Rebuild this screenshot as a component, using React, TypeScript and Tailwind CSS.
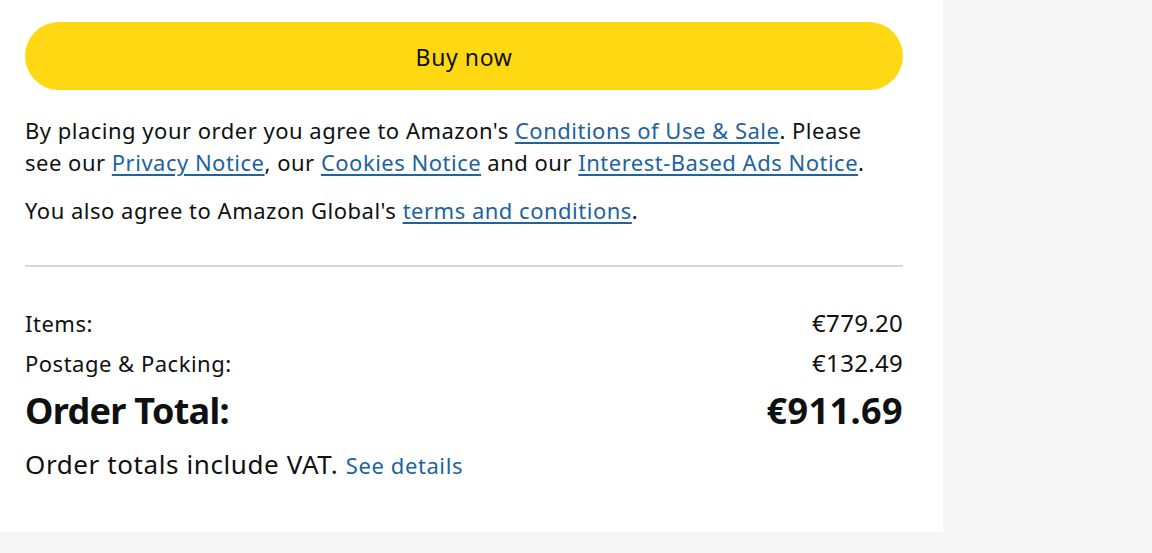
export default function App() {
  return (
    <div
      className="h-[553px] w-full overflow-hidden bg-[#f7f7f7] text-[#0f1111]"
      style={{ fontFamily: '"Noto Sans", "Open Sans", Arial, sans-serif' }}
    >
      <div className="h-[532px] w-[943px] bg-white pt-[22px] pr-[40px] pl-[25px]">
        <button
          type="button"
          className="flex h-[68px] w-full items-center justify-center rounded-full bg-[#ffd814] pt-[2px] text-[23px] tracking-[0.6px] text-[#0f1111]"
        >
          Buy now
        </button>

        <p className="mt-[24px] text-[22px] leading-[32px] tracking-[0.5px]">
          By placing your order you agree to Amazon's{" "}
          <Link>Conditions of Use &amp; Sale</Link>. Please see our{" "}
          <Link>Privacy Notice</Link>, our <Link>Cookies Notice</Link> and our{" "}
          <Link>Interest-Based Ads Notice</Link>.
        </p>
        <p className="mt-[16px] text-[22px] leading-[32px] tracking-[0.5px]">
          You also agree to Amazon Global's <Link>terms and conditions</Link>.
        </p>

        <div className="mt-[39px] h-[2px] w-full bg-[#d5d9d9]" />

        <div className="mt-[40px] flex flex-col gap-[8px]">
          <Row label="Items:" value="€779.20" />
          <Row label="Postage & Packing:" value="€132.49" />
        </div>
        <div className="mt-[10px] flex items-center justify-between text-[36px] leading-[44px] font-bold">
          <span className="tracking-[-0.7px]">Order Total:</span>
          <span className="tracking-[0.4px]">€911.69</span>
        </div>
        <div className="mt-[13px] text-[26px] leading-[36px] tracking-[0.6px]">
          Order totals include VAT.{" "}
          <span className="text-[22px] tracking-[0.6px] text-[#2162a1]">See details</span>
        </div>
      </div>
    </div>
  );
}

function Link({ children }: { children: React.ReactNode }) {
  return (
    <a className="text-[#2162a1] underline decoration-[1.5px] underline-offset-[3px]">
      {children}
    </a>
  );
}

function Row({ label, value }: { label: string; value: string }) {
  return (
    <div className="flex items-center justify-between leading-[32px]">
      <span className="text-[22px] tracking-[0.5px]">{label}</span>
      <span className="text-[24px] tracking-[0.3px]">{value}</span>
    </div>
  );
}
